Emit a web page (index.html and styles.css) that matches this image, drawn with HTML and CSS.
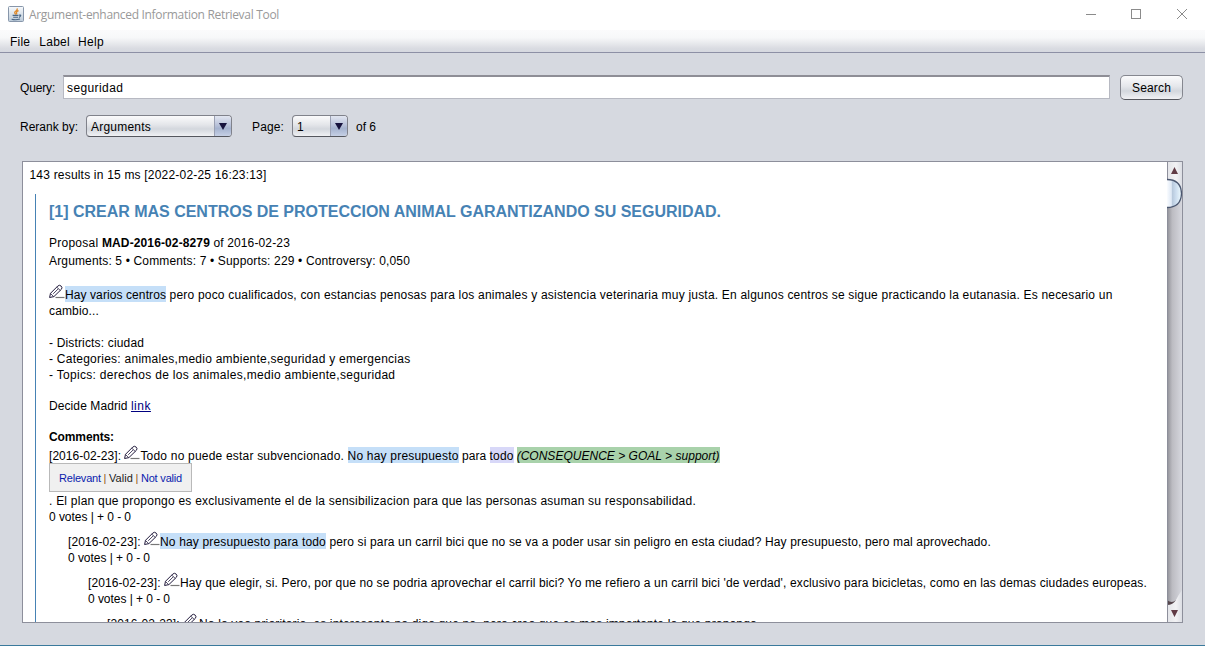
FILE: index.html
```
<!DOCTYPE html>
<html lang="es">
<head>
<meta charset="utf-8">
<title>Argument-enhanced Information Retrieval Tool</title>
<link rel="stylesheet" href="styles.css">
</head>
<body>
<svg class="defs" aria-hidden="true">
  <symbol id="pen" viewBox="0 0 16 16">
    <path d="M6.500 13.500H15.500" stroke="#777" stroke-width="1.2"/>
    <path d="M.6 13.500 1.5 9.300 8.800 2Q10.500.500 12.200 2.100 13.800 3.700 12.300 5.400L4.900 12.600Z" fill="#fff" stroke="#211a3c" stroke-width="1"/>
    <path d="M1.600 9.600 4.600 12.500M7.800 3.200 11.200 6.400M4.200 9.800 9.200 4.900" fill="none" stroke="#211a3c" stroke-width=".8"/>
  </symbol>
</svg>
<div class="window">
  <header class="titlebar">
    <svg class="java" viewBox="0 0 16 16">
      <defs><linearGradient id="tile" x2="0" y2="1"><stop offset="0" stop-color="#f8fafc"/><stop offset="1" stop-color="#bccbd9"/></linearGradient></defs>
      <rect x=".5" y=".5" width="15" height="15" rx="1" fill="url(#tile)" stroke="#8796aa"/>
      <path d="M8.8 2.500Q10 3.9 7.6 5.2 5.7 6.7 7.8 8.4M10.6 4.7Q7.3 6 9 8.3" fill="none" stroke="#df8a2b" stroke-width="1.3"/>
      <path d="M4.6 9.4H10.5M5.2 11.2H10M3.6 13.2Q8 14.3 12 12.9M11 9.200Q14.500 8.700 11 11.6" fill="none" stroke="#4b6786" stroke-width="1.1"/>
    </svg>
    <span class="caption">Argument-enhanced Information Retrieval Tool</span>
    <svg class="controls" viewBox="0 0 104 12" fill="none" stroke="#8b8b8b">
      <path d="M0 6.5H10"/><rect x="45.500" y="1.500" width="9" height="9"/><path d="M91 1 101 11M101 1 91 11"/>
    </svg>
  </header>
  <nav class="menubar"><span class="file">File</span><span class="wide">Label</span><span class="wide">Help</span></nav>
  <main class="body">
    <div class="query">
      <label class="query-label">Query:</label>
      <div class="field">seguridad</div>
      <button class="search">Search</button>
    </div>
    <div class="filters">
      <label class="rerank-label">Rerank by:</label>
      <div class="combo combo-rerank"><span class="value">Arguments</span><span class="arrow"></span></div>
      <label class="page-label">Page:</label>
      <div class="combo combo-page"><span class="value">1</span><span class="arrow"></span></div>
      <span class="total">of 6</span>
    </div>
    <section class="panel">
      <div class="results">
        <p class="summary">143 results in 15 ms [2022-02-25 16:23:13]</p>
        <article class="proposal">
          <h1 class="title">[1] CREAR MAS CENTROS DE PROTECCION ANIMAL GARANTIZANDO SU SEGURIDAD.</h1>
          <p class="line l14"><span class="l25">Proposal </span><b class="code">MAD-2016-02-8279</b> of 2016-02-23</p>
          <p class="line stats">Arguments: 5 • Comments: 7 • Supports: 229 • Controversy: 0,050</p>
          <p class="line gap-stats l20"><svg class="pen"><use href="#pen"/></svg><span class="claim l09">Hay varios centros</span> pero poco cualificados, con estancias penosas para los animales y asistencia veterinaria muy justa. En algunos centros se sigue practicando la eutanasia. Es necesario un</p>
          <p class="line l14">cambio...</p>
          <p class="line gap l16">- Districts: ciudad</p>
          <p class="line l25">- Categories: animales,medio ambiente,seguridad y emergencias</p>
          <p class="line topics">- Topics: derechos de los animales,medio ambiente,seguridad</p>
          <p class="line gap-small l09">Decide Madrid <a class="link">link</a></p>
          <p class="line gap-small comments">Comments:</p>
          <p class="line gap-line l20"><span class="l05">[2016-02-23]: </span><svg class="pen"><use href="#pen"/></svg>Todo no puede estar subvencionado. <span class="claim">No hay presupuesto</span><span class="l05"> para </span><span class="premise l16">todo</span><i class="relation-gap"> </i><i class="relation">(CONSEQUENCE &gt; GOAL &gt; support)</i></p>
          <div class="vote"><a class="opt">Relevant</a><span class="bar">|</span><a class="opt valid">Valid</a><span class="bar">|</span><a class="opt">Not valid</a></div>
          <p class="line plan">. El plan que propongo es exclusivamente el de la sensibilizacion para que las personas asuman su responsabilidad.</p>
          <p class="line votes">0 votes | + 0 - 0</p>
          <div class="reply">
            <p class="line l15"><span class="l09">[2016-02-23]: </span><svg class="pen"><use href="#pen"/></svg><span class="claim l16">No hay presupuesto para todo</span> pero si para un carril bici que no se va a poder usar sin peligro en esta ciudad? Hay presupuesto, pero mal aprovechado.</p>
            <p class="line votes">0 votes | + 0 - 0</p>
            <div class="reply nested">
              <p class="line l14"><span class="l09">[2016-02-23]: </span><svg class="pen"><use href="#pen"/></svg>Hay que elegir, si. Pero, por que no se podria aprovechar el carril bici? Yo me refiero a un carril bici 'de verdad', exclusivo para bicicletas, como en las demas ciudades europeas.</p>
              <p class="line votes">0 votes | + 0 - 0</p>
              <div class="reply">
                <p class="line l16"><span class="l09">[2016-02-23]: </span><svg class="pen"><use href="#pen"/></svg>No lo veo prioritario, es interesante no digo que no, pero creo que es mas importante lo que propongo.</p>
              </div>
            </div>
          </div>
        </article>
      </div>
      <svg class="scrollbar" viewBox="0 0 15 460">
        <defs>
          <linearGradient id="track"><stop offset="0" stop-color="#8e8e95"/><stop offset=".35" stop-color="#bcbcc2"/><stop offset="1" stop-color="#d6d7de"/></linearGradient>
          <linearGradient id="thumb"><stop offset="0" stop-color="#fafcff"/><stop offset=".3" stop-color="#dfe9f5"/><stop offset=".38" stop-color="#b9cadd"/><stop offset=".6" stop-color="#cbdcee"/><stop offset="1" stop-color="#eefaff"/></linearGradient>
          <linearGradient id="cap"><stop offset="0" stop-color="#e3e4e8"/><stop offset=".6" stop-color="#f2f2f4"/><stop offset="1" stop-color="#dcdee4"/></linearGradient>
        </defs>
        <rect width="15" height="460" fill="url(#cap)"/>
        <path d="M0 30H15V428Q12 432 9 438 6 442 0 442Z" fill="url(#track)"/>
        <path d="M0 438Q5 442 9 438 6 443 0 443Z" fill="#56464c"/>
        <path d="M.5 0V460" stroke="#8d8f9b"/>
        <path d="M0 17.500Q14 17.500 14.500 31.500 14 45.500 0 45.500Z" fill="url(#thumb)"/>
        <path d="M0 17.500Q14 17.500 14.500 31.500 14 45.500 0 45.500" fill="none" stroke="#4b5770" stroke-width="1.300"/>
        <path d="M4 12H11L7.500 5ZM4 448H11L7.500 455Z" fill="#613b45"/>
      </svg>
    </section>
  </main>
</div>
</body>
</html>
```
FILE: styles.css
```
* { box-sizing: border-box; }
body { margin: 0; }
p, h1 { margin: 0; }
.defs { position: absolute; width: 0; height: 0; }
.window {
  display: flex; flex-direction: column;
  width: 1205px; height: 646px; overflow: hidden;
  background: #d6d9e0; border-bottom: 1px solid #3a7a9c;
  font: 12px/16px "Liberation Sans", Arial, sans-serif; color: #000;
}
.titlebar { display: flex; align-items: center; height: 30px; padding: 0 15px 2px 8px; background: #fff; }
.java { width: 16px; height: 16px; margin-right: 5px; }
.caption { font-family: "Open Sans", sans-serif; letter-spacing: -.313px; color: #999; padding-top: 2px; }
.controls { width: 104px; height: 12px; margin-left: auto; }
.menubar {
  display: flex; gap: 8px; height: 23px; padding: 4px 10px 0;
  background: linear-gradient(#fbfbfc, #f7f8f9 35%, #d9dbe1 85%, #d6d9e0);
  border-bottom: 1px solid #8d90a5;
}
.file { letter-spacing: .2px; margin-right: 1px; }
.wide { letter-spacing: .32px; }
.body { padding: 22px 22px 0 20px; }
.query { display: flex; align-items: center; height: 25px; }
.query-label { width: 43px; letter-spacing: -.16px; }
.field {
  align-self: flex-start; width: 1047px; height: 24px; padding: 3px 3px 0; margin-right: 10px;
  background: #fff; border: 1px solid #b7b9c2; border-top: 2px solid #8e8e96;
  line-height: 16px; letter-spacing: .4px;
}
.search {
  width: 63px; height: 25px; padding: 0; border: 1px solid #85878f; border-bottom-color: #55575e; border-radius: 5px;
  background: linear-gradient(#fbfbfc, #e5e7eb 45%, #d3d7dd 65%, #f0f1f4);
  font: inherit; letter-spacing: .16px; color: #000;
}
.filters { display: flex; align-items: center; height: 24px; margin-top: 14px; }
.filters label, .total { padding-top: 2px; }
.rerank-label { width: 66px; }
.combo {
  display: flex; height: 22px; overflow: hidden;
  border: 1px solid #80828b; border-bottom-color: #55575e; border-radius: 4px;
  background: linear-gradient(#fbfbfc, #e3e5e9 45%, #d3d7dd 65%, #f0f1f4);
}
.combo-rerank { width: 146px; margin-right: 20px; }
.combo-page { width: 56px; margin-right: 8px; }
.value { flex: 1; padding: 3px 4px 0; letter-spacing: .22px; }
.arrow {
  display: flex; align-items: center; justify-content: center; width: 17px;
  background: linear-gradient(#e2e6f1, #b6c0d8 48%, #a5b3cf 62%, #c6d0e5);
  border-left: 1px solid #9aa0b3;
}
.arrow::before { content: ""; border: 4px solid transparent; border-top: 7px solid #16123d; border-bottom: 0; }
.page-label { width: 40px; letter-spacing: .13px; }
.panel {
  display: flex; width: 1161px; height: 462px; margin: 23px 0 0 2px;
  background: #fff; border: 1px solid #8d8f9b;
}
.results { width: 1144px; height: 460px; overflow: hidden; }
.scrollbar { width: 15px; height: 460px; }
.summary { height: 16px; margin: 5px 0 11px 6.5px; letter-spacing: .195px; }
.proposal { margin-left: 12px; padding-left: 13px; border-left: 1px solid #4682b4; height: 440px; }
.title {
  height: 41px; padding-top: 8px;
  font-size: 16px; line-height: 20px; color: #4682b4; letter-spacing: -.013px;
}
.line { height: 16px; white-space: pre; }
.stats { margin-top: 2px; letter-spacing: .152px; }
.gap-stats { margin-top: 18px; }
.gap { margin-top: 16px; }
.gap-small { margin-top: 15px; }
.gap-line { margin-top: 3px; }
.code { letter-spacing: .12px; }
.topics { letter-spacing: .3px; }
.comments { font-weight: bold; letter-spacing: -.113px; }
.plan { letter-spacing: .233px; }
.votes { letter-spacing: -.049px; }
.l05 { letter-spacing: .05px; }
.l09 { letter-spacing: .09px; }
.l14 { letter-spacing: .139px; }
.l15 { letter-spacing: .154px; }
.l16 { letter-spacing: .16px; }
.l20 { letter-spacing: .2px; }
.l25 { letter-spacing: .25px; }
.pen { width: 16px; height: 16px; margin: -4px 0 -1px; vertical-align: 0; }
.link { color: #000080; text-decoration: underline; letter-spacing: .49px; }
.claim, .premise, .relation { padding: 2px 0 0; }
.claim { background: #c5dff8; }
.premise { background: #d8d8f8; }
.relation-gap { letter-spacing: -.3px; }
.relation { background: #a9d2ab; letter-spacing: .016px; }
.vote {
  display: flex; align-items: center; width: 143px; height: 29px; margin: -1px 0 1px; padding: 1px 0 0 9px;
  background: #f0f0f0; border: 1px solid #b9b9b9; font-size: 11px;
}
.opt { color: #0a1cae; letter-spacing: -.19px; }
.valid { color: #222; letter-spacing: .07px; }
.bar { width: 8px; text-align: center; color: #94590f; }
.reply { margin: 9px 0 0 19px; }
.nested { margin-left: 20px; }
```
